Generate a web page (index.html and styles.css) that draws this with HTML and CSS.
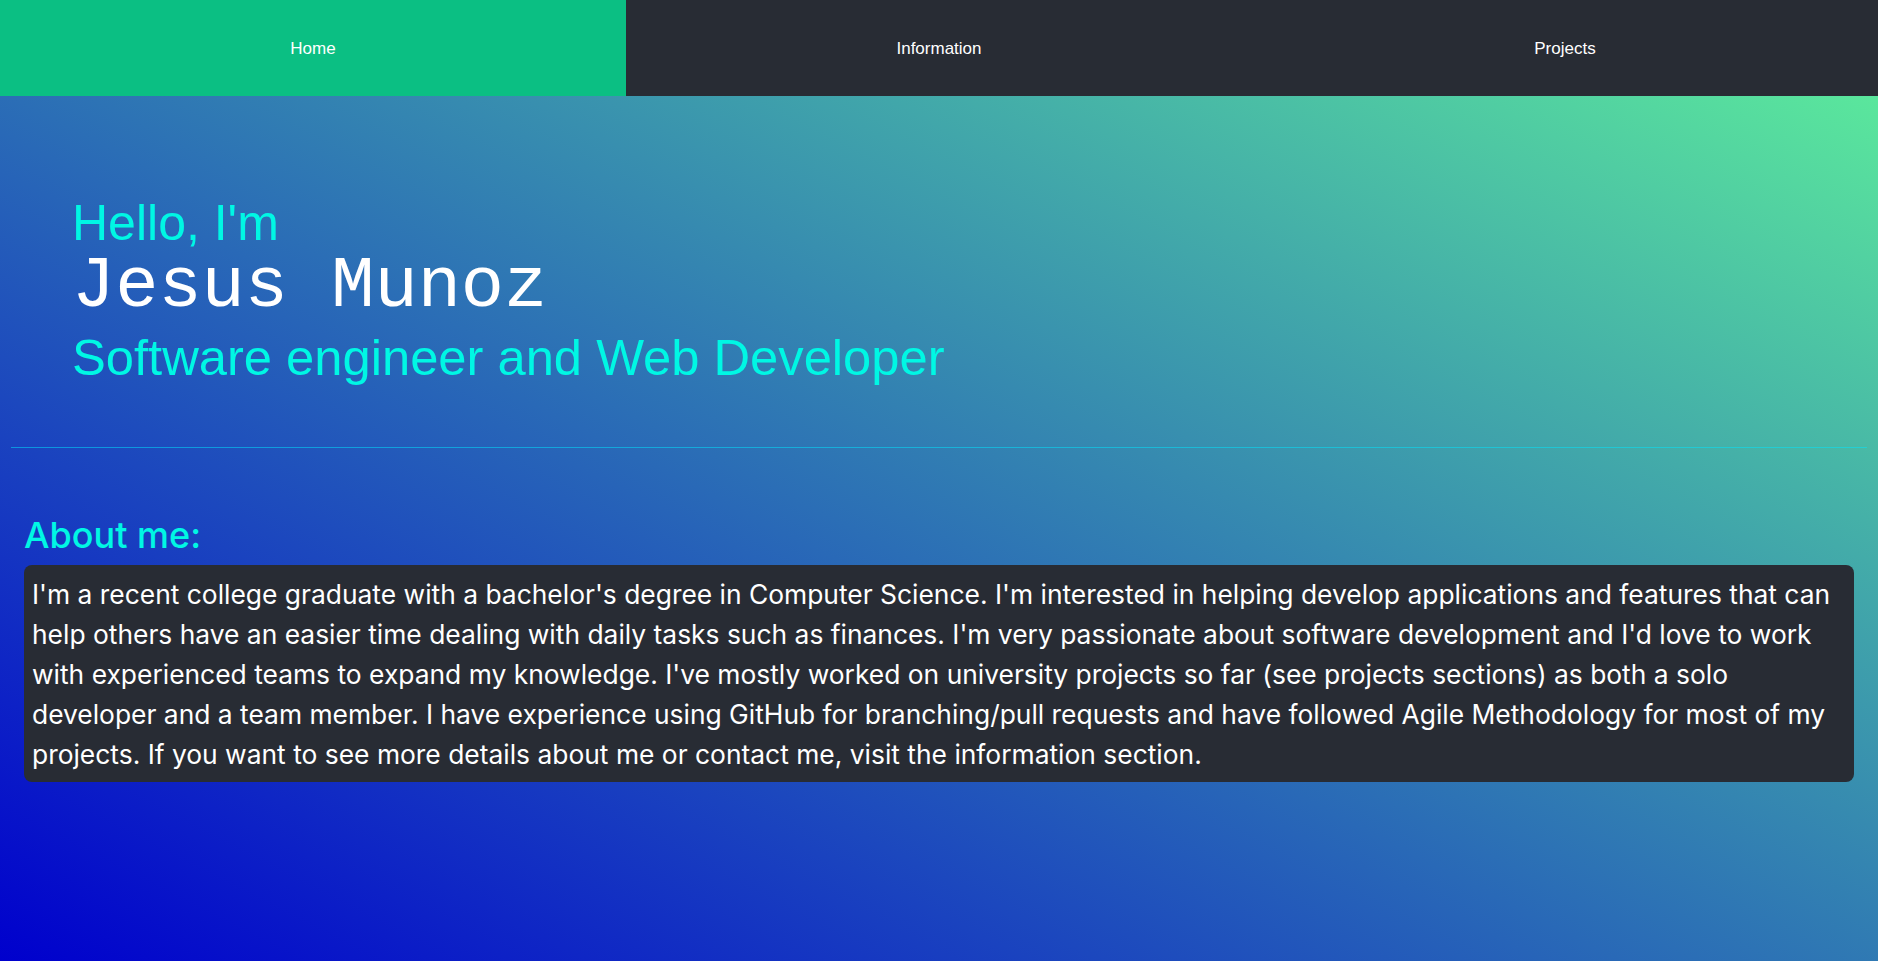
FILE: index.html
```html
<!DOCTYPE html>
<html lang="en">
<head>
<meta charset="utf-8">
<title>Jesus Munoz</title>
<link rel="stylesheet" href="styles.css">
</head>
<body>
<nav class="nav">
  <a class="nav-item active" href="#">Home</a>
  <a class="nav-item" href="#">Information</a>
  <a class="nav-item" href="#">Projects</a>
</nav>
<main class="main">
  <section class="hero">
    <div class="hello">Hello, I'm</div>
    <h1 class="name">Jesus Munoz</h1>
    <div class="role">Software engineer and Web Developer</div>
  </section>
  <hr class="divider">
  <section class="about">
    <h2 class="about-title">About me:</h2>
    <p class="about-card">I'm a recent college graduate with a bachelor's degree in Computer Science. I'm interested in helping develop applications and features that can help others have an easier time dealing with daily tasks such as finances. I'm very passionate about software development and I'd love to work with experienced teams to expand my knowledge. I've mostly worked on university projects so far (see projects sections) as both a solo developer and a team member. I have experience using GitHub for branching/pull requests and have followed Agile Methodology for most of my projects. If you want to see more details about me or contact me, visit the information section.</p>
  </section>
</main>
</body>
</html>
```

FILE: styles.css
```css
html, body {
  margin: 0;
  padding: 0;
}

body {
  min-height: 100vh;
  background: linear-gradient(to top right, #0000cd, #5ff39a);
  font-family: "Liberation Sans", Arial, sans-serif;
}

.nav {
  display: grid;
  grid-template-columns: 1fr 1fr 1fr;
  height: 96px;
  background: #282c34;
}

.nav-item {
  display: flex;
  align-items: center;
  justify-content: center;
  padding-top: 1px;
  color: #ffffff;
  text-decoration: none;
  font-family: "Liberation Sans", Arial, sans-serif;
  font-size: 17px;
}

.nav-item.active {
  background: #0bbf83;
}

.hero {
  padding: 99px 72px 0;
}

.hello {
  font-size: 50px;
  line-height: 56px;
  color: #00f7e4;
}

.name {
  margin: 0;
  font-family: "Liberation Mono", "Courier New", monospace;
  font-weight: normal;
  font-size: 72px;
  line-height: 72px;
  color: #ffffff;
}

.role {
  margin-top: 7px;
  font-size: 50.7px;
  line-height: 56px;
  color: #00f7e4;
}

.divider {
  margin: 61px 11px 0;
  border: 0;
  border-top: 1px solid rgba(0, 230, 255, 0.5);
  height: 0;
}

.about {
  padding: 0 24px;
  font-family: Inter, "Noto Sans", sans-serif;
}

.about-title {
  margin: 66px 0 9px;
  font-size: 36px;
  line-height: 42px;
  font-weight: 500;
  color: #00f7e4;
}

.about-card {
  margin: 0;
  padding: 9px 10px 8px 8px;
  background: #282c34;
  border-radius: 8px;
  color: #ffffff;
  font-size: 26.4px;
  line-height: 40px;
}
```
